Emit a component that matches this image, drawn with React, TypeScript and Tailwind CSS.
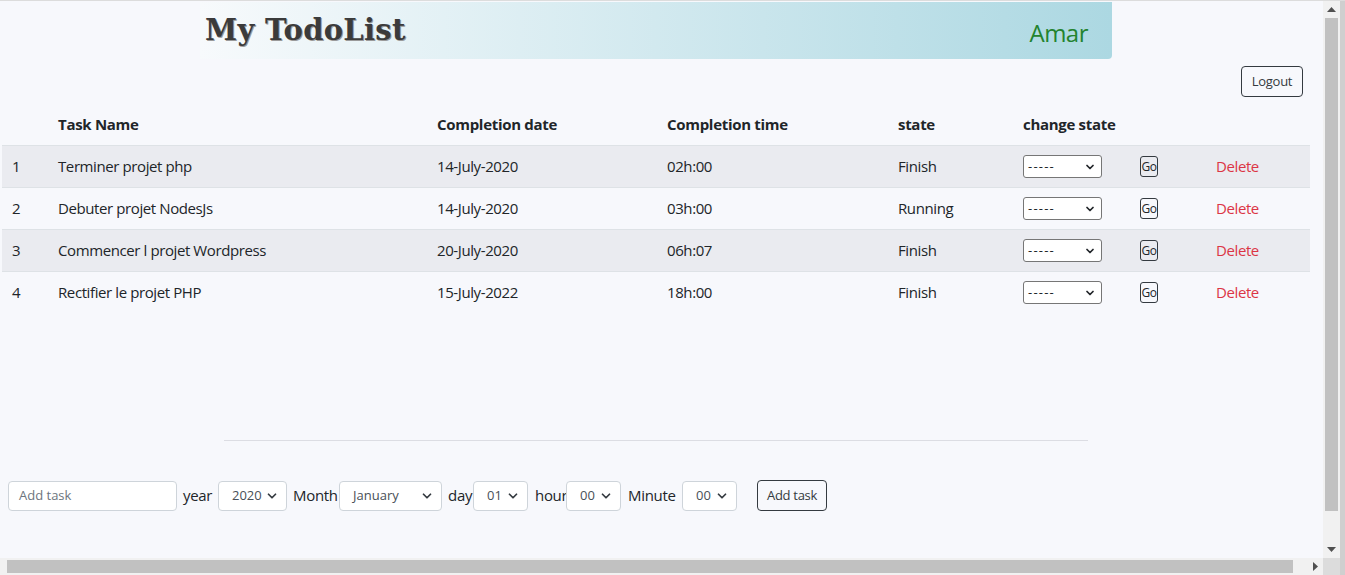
import { ChevronDown } from "lucide-react";

const tasks = [
  { id: 1, name: "Terminer projet php", date: "14-July-2020", time: "02h:00", state: "Finish" },
  { id: 2, name: "Debuter projet NodesJs", date: "14-July-2020", time: "03h:00", state: "Running" },
  { id: 3, name: "Commencer l projet Wordpress", date: "20-July-2020", time: "06h:07", state: "Finish" },
  { id: 4, name: "Rectifier le projet PHP", date: "15-July-2022", time: "18h:00", state: "Finish" },
];

const cols = "grid grid-cols-[46px_379px_230px_231px_125px_117px_76px_104px]";

function FakeSelect({ value, className }: { value: string; className: string }) {
  return (
    <div
      className={`flex shrink-0 items-center justify-between rounded-[4px] border border-[#ced4da] bg-white pl-[13px] pr-[7px] text-[13px] tracking-normal text-[#495057] ${className}`}
    >
      <span>{value}</span>
      <ChevronDown className="h-[14px] w-[14px] text-[#343a40]" strokeWidth={3} />
    </div>
  );
}

export default function App() {
  return (
    <div
      className="flex h-[575px] w-[1345px] flex-col overflow-hidden border-t border-[#dcdcdc] bg-[#f7f8fc] text-[#212529]"
      style={{ fontFamily: '"Open Sans", "Noto Sans", sans-serif' }}
    >
      <div className="flex min-h-0 flex-1">
        <main className="w-[1323px] shrink-0">
          {/* header banner */}
          <div className="ml-[200px] mt-px flex h-[57px] w-[912px] items-center justify-between rounded-br-[4px] bg-gradient-to-r from-[#f7fafc] to-[#acd8e2] pl-[5px] pr-[24px]">
            <span
              className="text-[29px] font-bold tracking-[0.3px] text-[#3b3b3b] [text-shadow:1px_1px_0_#9a9a9a]"
              style={{ fontFamily: '"DejaVu Serif", serif' }}
            >
              My TodoList
            </span>
            <span className="mt-[4px] text-[24px] tracking-[-0.5px] text-[#23832f]">Amar</span>
          </div>

          <div className="flex justify-end pr-[20px] pt-[7px]">
            <button className="h-[31px] w-[62px] rounded-[4px] border border-[#343a40] text-[13px] tracking-[-0.3px] text-[#343a40]">
              Logout
            </button>
          </div>

          {/* table */}
          <div className="ml-[2px] mt-[7px] w-[1308px] text-[15px] tracking-[-0.4px]">
            <div className={`${cols} h-[41px] items-center font-bold tracking-[-0.3px]`}>
              <div></div>
              <div className="pl-[10px]">Task Name</div>
              <div className="pl-[10px]">Completion date</div>
              <div className="pl-[10px]">Completion time</div>
              <div className="pl-[10px]">state</div>
              <div className="pl-[10px]">change state</div>
              <div></div>
              <div></div>
            </div>
            {tasks.map((t, i) => (
              <div
                key={t.id}
                className={`${cols} h-[42px] items-center border-t border-[#dee2e6] ${i % 2 === 0 ? "bg-[#eaebf0]" : ""}`}
              >
                <div className="pl-[10px]">{t.id}</div>
                <div className="pl-[10px]">{t.name}</div>
                <div className="pl-[10px]">{t.date}</div>
                <div className="pl-[10px]">{t.time}</div>
                <div className="pl-[10px]">{t.state}</div>
                <div className="pl-[10px]">
                  <div className="flex h-[23px] w-[79px] items-center justify-between rounded-[3px] border border-[#767676] bg-white pl-[4px] pr-[5px] text-[13px]">
                    <span className="tracking-[1.2px]">-----</span>
                    <ChevronDown className="h-[12px] w-[12px]" strokeWidth={3.5} />
                  </div>
                </div>
                <div className="pl-[10px]">
                  <button className="flex h-[21px] w-[18px] items-center justify-center rounded-[3px] border border-[#343a40] text-[12px] tracking-[-0.5px]">
                    Go
                  </button>
                </div>
                <div className="pl-[10px] text-[#dc3545]">Delete</div>
              </div>
            ))}
          </div>

          <div className="ml-[224px] mt-[127px] h-px w-[864px] bg-[#dcdde3]" />

          {/* add form */}
          <div className="ml-[8px] mt-[39px] flex items-center text-[15px] tracking-[-0.3px]">
            <div className="flex h-[30px] w-[169px] shrink-0 items-center rounded-[4px] border border-[#ced4da] bg-white pl-[10px] text-[13px] tracking-normal text-[#6c757d]">
              Add task
            </div>
            <span className="ml-[6px] w-[35px]">year</span>
            <FakeSelect value="2020" className="h-[30px] w-[69px]" />
            <span className="ml-[6px] w-[46px]">Month</span>
            <FakeSelect value="January" className="h-[30px] w-[103px]" />
            <span className="ml-[6px] w-[25px]">day</span>
            <FakeSelect value="01" className="h-[30px] w-[55px]" />
            <span className="ml-[7px] w-[31px]">hour</span>
            <FakeSelect value="00" className="h-[30px] w-[55px]" />
            <span className="ml-[7px] w-[54px]">Minute</span>
            <FakeSelect value="00" className="h-[30px] w-[55px]" />
            <button className="ml-[20px] h-[31px] w-[70px] shrink-0 rounded-[4px] border border-[#343a40] text-[13px] tracking-[-0.3px] text-[#343a40]">
              Add task
            </button>
          </div>
        </main>

        {/* vertical scrollbar */}
        <div className="flex w-[17px] shrink-0 flex-col items-center bg-[#f1f1f1]">
          <div className="flex h-[17px] items-center text-[#505050]">
            <svg width="9" height="5" viewBox="0 0 9 5"><path d="M0 5 L4.5 0 L9 5Z" fill="currentColor" /></svg>
          </div>
          <div className="mb-[30px] w-[13px] flex-1 bg-[#c1c1c1]" />
          <div className="flex h-[17px] items-center text-[#505050]">
            <svg width="9" height="5" viewBox="0 0 9 5"><path d="M0 0 L4.5 5 L9 0Z" fill="currentColor" /></svg>
          </div>
        </div>
        <div className="w-[5px] shrink-0 bg-[#cfcfcf]" />
      </div>

      {/* horizontal scrollbar */}
      <div className="flex h-[17px] shrink-0">
        <div className="flex w-[1323px] items-center bg-[#f1f1f1] pl-[7px]">
          <div className="h-[13px] w-[1286px] bg-[#c1c1c1]" />
          <div className="ml-auto mr-[5px] text-[#505050]">
            <svg width="5" height="9" viewBox="0 0 5 9"><path d="M0 0 L5 4.5 L0 9Z" fill="currentColor" /></svg>
          </div>
        </div>
        <div className="w-[17px] bg-[#dcdcdc]" />
        <div className="w-[5px] bg-[#cfcfcf]" />
      </div>
    </div>
  );
}
